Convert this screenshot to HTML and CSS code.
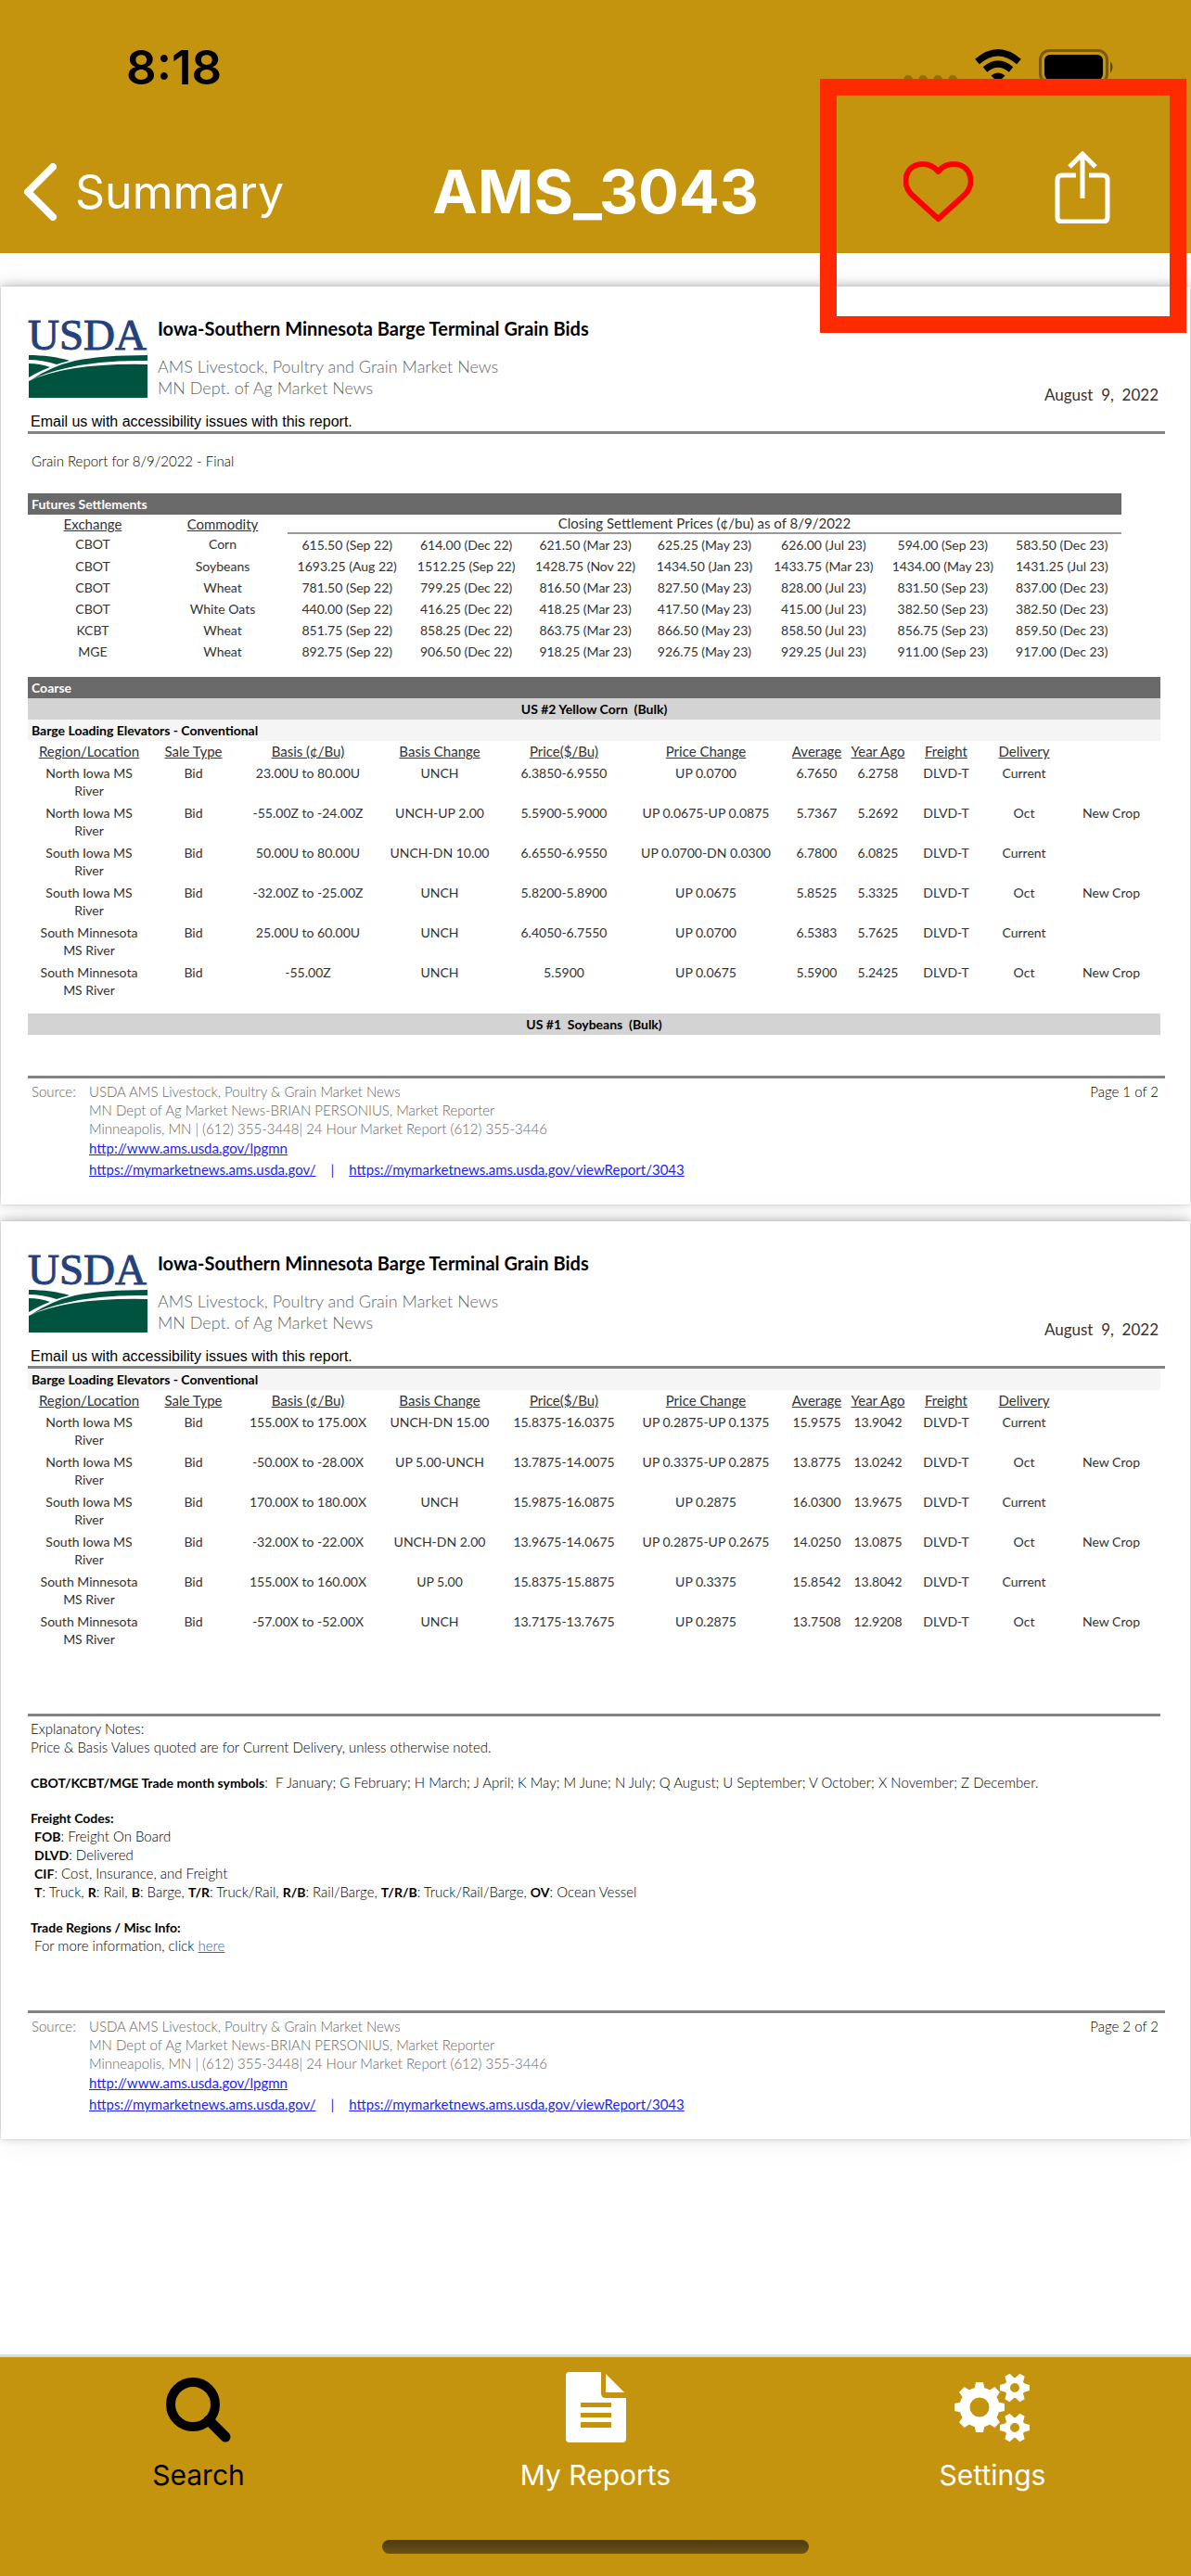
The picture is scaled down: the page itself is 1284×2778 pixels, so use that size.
FILE: index.html
```html
<!DOCTYPE html>
<html lang="en">
<head>
<meta charset="utf-8">
<meta name="viewport" content="width=device-width, initial-scale=1">
<title>AMS_3043</title>
<link rel="stylesheet" href="styles.css">
</head>
<body>
<svg class="defs" aria-hidden="true">
  <symbol id="fields" viewBox="0 0 128 46">
    <path fill="#00533e" d="M0 0C15 0 32 2 44 6Q36 8 30 10Q14 5 0 5ZM0 9Q12 9 23 13Q10 18 2 23L0 24ZM50 6Q80 0 128 0V6Q78 5 40 14Q18 19 2 27Q24 12 50 6ZM0 28Q44 8 128 10V46H0Z"/>
  </symbol>
</svg>

<header class="app-bar">
  <div class="status-bar">
    <span class="clock">8:18</span>
    <span class="status-icons">
      <svg width="58" height="38" viewBox="0 0 58 38" fill="#94700c"><circle cx="5" cy="33" r="5"/><circle cx="21" cy="33" r="5"/><circle cx="37" cy="33" r="5"/><circle cx="53" cy="33" r="5"/></svg>
      <svg width="50" height="38" viewBox="0 0 50 38" fill="none" stroke="#000" stroke-width="7"><path d="M2.500 13.500Q25-6 47.500 13.500"/><path d="M11 22Q25 10 39 22"/><path d="M25 36L17.500 28.500Q25 22.500 32.500 28.500Z" fill="#000" stroke="none"/></svg>
      <svg width="82" height="38" viewBox="0 0 82 38"><rect x="1.500" y="1.500" width="72" height="35" rx="10" fill="none" stroke="#795b0b" stroke-width="3"/><rect x="6" y="6" width="63" height="27" rx="6"/><path d="M77 13q5 6 0 13z" fill="#594308"/></svg>
    </span>
  </div>
  <nav class="nav-row">
    <a class="back" href="#summary">
      <svg width="36" height="62" viewBox="0 0 36 62" fill="none" stroke="#fff" stroke-width="8" stroke-linecap="round" stroke-linejoin="round"><path d="M32 4L5 31l27 27"/></svg>
      Summary
    </a>
    <h1 class="screen-title">AMS_3043</h1>
    <div class="actions">
      <button class="icon-btn" type="button" aria-label="Favorite">
        <svg width="75" height="78" viewBox="0 0 75 78" fill="none" stroke="#f00" stroke-width="6" stroke-linejoin="round"><path d="M37.500 73L9 47C-3 35 2 14 21 14C30 14 35 19 37.500 22C40 19 45 14 54 14C73 14 78 35 66 47Z"/></svg>
      </button>
      <button class="icon-btn" type="button" aria-label="Share">
        <svg width="60" height="78" viewBox="0 0 60 78" fill="none" stroke="#fff" stroke-width="5"><path d="M23 26H8q-5 0-5 5v40q0 5 5 5h44q5 0 5-5V31q0-5-5-5H37M30 51V4M16 17L30 3l14 14"/></svg>
      </button>
    </div>
  </nav>
  <div class="highlight" aria-hidden="true"></div>
</header>

<main class="viewer">
  <article class="sheet">
    <header class="report-head">
      <svg class="logo" width="129" height="90" viewBox="0 0 129 90" role="img" aria-label="USDA"><text x="0" y="38" class="logo-text">USDA</text><use href="#fields" x="1" y="44" width="128" height="46"/></svg>
      <div class="report-names">
        <h2>Iowa-Southern Minnesota Barge Terminal Grain Bids</h2>
        <p>AMS Livestock, Poultry and Grain Market News<br>MN Dept. of Ag Market News</p>
      </div>
      <time class="report-date" datetime="2022-08-09">August&nbsp; 9,&nbsp; 2022</time>
    </header>
    <p class="contact">Email us with accessibility issues with this report.</p>
    <div class="body">
      <p class="subject">Grain Report for 8/9/2022 - Final</p>

      <table class="futures">
        <caption class="band dark">Futures Settlements</caption>
        <colgroup><col class="w140"><col class="w140"><col><col><col><col><col><col><col></colgroup>
        <thead>
          <tr><th><u>Exchange</u></th><th><u>Commodity</u></th><th colspan="7" class="span-head">Closing Settlement Prices (¢/bu) as of 8/9/2022</th></tr>
        </thead>
        <tbody>
          <tr><td>CBOT</td><td>Corn</td><td>615.50 (Sep 22)</td><td>614.00 (Dec 22)</td><td>621.50 (Mar 23)</td><td>625.25 (May 23)</td><td>626.00 (Jul 23)</td><td>594.00 (Sep 23)</td><td>583.50 (Dec 23)</td></tr>
          <tr><td>CBOT</td><td>Soybeans</td><td>1693.25 (Aug 22)</td><td>1512.25 (Sep 22)</td><td>1428.75 (Nov 22)</td><td>1434.50 (Jan 23)</td><td>1433.75 (Mar 23)</td><td>1434.00 (May 23)</td><td>1431.25 (Jul 23)</td></tr>
          <tr><td>CBOT</td><td>Wheat</td><td>781.50 (Sep 22)</td><td>799.25 (Dec 22)</td><td>816.50 (Mar 23)</td><td>827.50 (May 23)</td><td>828.00 (Jul 23)</td><td>831.50 (Sep 23)</td><td>837.00 (Dec 23)</td></tr>
          <tr><td>CBOT</td><td>White Oats</td><td>440.00 (Sep 22)</td><td>416.25 (Dec 22)</td><td>418.25 (Mar 23)</td><td>417.50 (May 23)</td><td>415.00 (Jul 23)</td><td>382.50 (Sep 23)</td><td>382.50 (Dec 23)</td></tr>
          <tr><td>KCBT</td><td>Wheat</td><td>851.75 (Sep 22)</td><td>858.25 (Dec 22)</td><td>863.75 (Mar 23)</td><td>866.50 (May 23)</td><td>858.50 (Jul 23)</td><td>856.75 (Sep 23)</td><td>859.50 (Dec 23)</td></tr>
          <tr><td>MGE</td><td>Wheat</td><td>892.75 (Sep 22)</td><td>906.50 (Dec 22)</td><td>918.25 (Mar 23)</td><td>926.75 (May 23)</td><td>929.25 (Jul 23)</td><td>911.00 (Sep 23)</td><td>917.00 (Dec 23)</td></tr>
        </tbody>
      </table>

      <h3 class="band dark coarse">Coarse</h3>
      <h3 class="band mid">US #2 Yellow Corn&nbsp; (Bulk)</h3>
      <table class="bids">
        <caption class="band light">Barge Loading Elevators - Conventional</caption>
        <colgroup><col class="w132"><col class="w93"><col class="w154"><col class="w130"><col class="w138"><col class="w168"><col class="w71"><col class="w61"><col class="w86"><col class="w82"><col class="w106"></colgroup>
        <thead>
          <tr><th><u>Region/Location</u></th><th><u>Sale Type</u></th><th><u>Basis (¢/Bu)</u></th><th><u>Basis Change</u></th><th><u>Price($/Bu)</u></th><th><u>Price Change</u></th><th><u>Average</u></th><th><u>Year Ago</u></th><th><u>Freight</u></th><th><u>Delivery</u></th><td></td></tr>
        </thead>
        <tbody>
          <tr><td>North Iowa MS<br>River</td><td>Bid</td><td>23.00U to 80.00U</td><td>UNCH</td><td>6.3850-6.9550</td><td>UP 0.0700</td><td>6.7650</td><td>6.2758</td><td>DLVD-T</td><td>Current</td><td></td></tr>
          <tr><td>North Iowa MS<br>River</td><td>Bid</td><td>-55.00Z to -24.00Z</td><td>UNCH-UP 2.00</td><td>5.5900-5.9000</td><td>UP 0.0675-UP 0.0875</td><td>5.7367</td><td>5.2692</td><td>DLVD-T</td><td>Oct</td><td>New Crop</td></tr>
          <tr><td>South Iowa MS<br>River</td><td>Bid</td><td>50.00U to 80.00U</td><td>UNCH-DN 10.00</td><td>6.6550-6.9550</td><td>UP 0.0700-DN 0.0300</td><td>6.7800</td><td>6.0825</td><td>DLVD-T</td><td>Current</td><td></td></tr>
          <tr><td>South Iowa MS<br>River</td><td>Bid</td><td>-32.00Z to -25.00Z</td><td>UNCH</td><td>5.8200-5.8900</td><td>UP 0.0675</td><td>5.8525</td><td>5.3325</td><td>DLVD-T</td><td>Oct</td><td>New Crop</td></tr>
          <tr><td>South Minnesota<br>MS River</td><td>Bid</td><td>25.00U to 60.00U</td><td>UNCH</td><td>6.4050-6.7550</td><td>UP 0.0700</td><td>6.5383</td><td>5.7625</td><td>DLVD-T</td><td>Current</td><td></td></tr>
          <tr><td>South Minnesota<br>MS River</td><td>Bid</td><td>-55.00Z</td><td>UNCH</td><td>5.5900</td><td>UP 0.0675</td><td>5.5900</td><td>5.2425</td><td>DLVD-T</td><td>Oct</td><td>New Crop</td></tr>
        </tbody>
      </table>
      <h3 class="band mid next-class">US #1&nbsp; Soybeans&nbsp; (Bulk)</h3>
    </div>
    <footer class="source after-band">
      <span class="source-label">Source:</span>
      <div class="source-text">
        <p>USDA AMS Livestock, Poultry &amp; Grain Market News<br>MN Dept of Ag Market News-BRIAN PERSONIUS, Market Reporter<br>Minneapolis, MN | (612) 355-3448| 24 Hour Market Report (612) 355-3446</p>
        <p class="links"><a href="#lpgmn">http://www.ams.usda.gov/lpgmn</a></p>
        <p class="links"><a href="#mymarketnews">https://mymarketnews.ams.usda.gov/</a><span class="bar">|</span><a href="#report">https://mymarketnews.ams.usda.gov/viewReport/3043</a></p>
      </div>
      <span class="page-no">Page 1 of 2</span>
    </footer>
  </article>

  <article class="sheet">
    <header class="report-head">
      <svg class="logo" width="129" height="90" viewBox="0 0 129 90" role="img" aria-label="USDA"><text x="0" y="38" class="logo-text">USDA</text><use href="#fields" x="1" y="44" width="128" height="46"/></svg>
      <div class="report-names">
        <h2>Iowa-Southern Minnesota Barge Terminal Grain Bids</h2>
        <p>AMS Livestock, Poultry and Grain Market News<br>MN Dept. of Ag Market News</p>
      </div>
      <time class="report-date" datetime="2022-08-09">August&nbsp; 9,&nbsp; 2022</time>
    </header>
    <p class="contact">Email us with accessibility issues with this report.</p>
    <div class="body">
      <table class="bids">
        <caption class="band light">Barge Loading Elevators - Conventional</caption>
        <colgroup><col class="w132"><col class="w93"><col class="w154"><col class="w130"><col class="w138"><col class="w168"><col class="w71"><col class="w61"><col class="w86"><col class="w82"><col class="w106"></colgroup>
        <thead>
          <tr><th><u>Region/Location</u></th><th><u>Sale Type</u></th><th><u>Basis (¢/Bu)</u></th><th><u>Basis Change</u></th><th><u>Price($/Bu)</u></th><th><u>Price Change</u></th><th><u>Average</u></th><th><u>Year Ago</u></th><th><u>Freight</u></th><th><u>Delivery</u></th><td></td></tr>
        </thead>
        <tbody>
          <tr><td>North Iowa MS<br>River</td><td>Bid</td><td>155.00X to 175.00X</td><td>UNCH-DN 15.00</td><td>15.8375-16.0375</td><td>UP 0.2875-UP 0.1375</td><td>15.9575</td><td>13.9042</td><td>DLVD-T</td><td>Current</td><td></td></tr>
          <tr><td>North Iowa MS<br>River</td><td>Bid</td><td>-50.00X to -28.00X</td><td>UP 5.00-UNCH</td><td>13.7875-14.0075</td><td>UP 0.3375-UP 0.2875</td><td>13.8775</td><td>13.0242</td><td>DLVD-T</td><td>Oct</td><td>New Crop</td></tr>
          <tr><td>South Iowa MS<br>River</td><td>Bid</td><td>170.00X to 180.00X</td><td>UNCH</td><td>15.9875-16.0875</td><td>UP 0.2875</td><td>16.0300</td><td>13.9675</td><td>DLVD-T</td><td>Current</td><td></td></tr>
          <tr><td>South Iowa MS<br>River</td><td>Bid</td><td>-32.00X to -22.00X</td><td>UNCH-DN 2.00</td><td>13.9675-14.0675</td><td>UP 0.2875-UP 0.2675</td><td>14.0250</td><td>13.0875</td><td>DLVD-T</td><td>Oct</td><td>New Crop</td></tr>
          <tr><td>South Minnesota<br>MS River</td><td>Bid</td><td>155.00X to 160.00X</td><td>UP 5.00</td><td>15.8375-15.8875</td><td>UP 0.3375</td><td>15.8542</td><td>13.8042</td><td>DLVD-T</td><td>Current</td><td></td></tr>
          <tr><td>South Minnesota<br>MS River</td><td>Bid</td><td>-57.00X to -52.00X</td><td>UNCH</td><td>13.7175-13.7675</td><td>UP 0.2875</td><td>13.7508</td><td>12.9208</td><td>DLVD-T</td><td>Oct</td><td>New Crop</td></tr>
        </tbody>
      </table>

      <section class="notes">
        <p>Explanatory Notes:<br>Price &amp; Basis Values quoted are for Current Delivery, unless otherwise noted.</p>
        <p><b>CBOT/KCBT/MGE Trade month symbols</b>:&nbsp; F January; G February; H March; J April; K May; M June; N July; Q August; U September; V October; X November; Z December.</p>
        <p><b>Freight Codes:</b><br>&nbsp;<b>FOB</b>: Freight On Board<br>&nbsp;<b>DLVD</b>: Delivered<br>&nbsp;<b>CIF</b>: Cost, Insurance, and Freight<br>&nbsp;<b>T</b>: Truck, <b>R</b>: Rail, <b>B</b>: Barge, <b>T/R</b>: Truck/Rail, <b>R/B</b>: Rail/Barge, <b>T/R/B</b>: Truck/Rail/Barge, <b>OV</b>: Ocean Vessel</p>
        <p><b>Trade Regions / Misc Info:</b><br>&nbsp;For more information, click <a class="here" href="#info">here</a></p>
      </section>
    </div>
    <footer class="source after-notes">
      <span class="source-label">Source:</span>
      <div class="source-text">
        <p>USDA AMS Livestock, Poultry &amp; Grain Market News<br>MN Dept of Ag Market News-BRIAN PERSONIUS, Market Reporter<br>Minneapolis, MN | (612) 355-3448| 24 Hour Market Report (612) 355-3446</p>
        <p class="links"><a href="#lpgmn">http://www.ams.usda.gov/lpgmn</a></p>
        <p class="links"><a href="#mymarketnews">https://mymarketnews.ams.usda.gov/</a><span class="bar">|</span><a href="#report">https://mymarketnews.ams.usda.gov/viewReport/3043</a></p>
      </div>
      <span class="page-no">Page 2 of 2</span>
    </footer>
  </article>
</main>

<footer class="tab-area">
  <nav class="tabs">
    <a class="tab current" href="#search">
      <svg width="70" height="76" viewBox="0 0 70 76" fill="none" stroke="currentColor" stroke-width="10"><circle cx="29" cy="35" r="24"/><path d="M46 52l18 18" stroke-linecap="round" stroke-width="11"/></svg>
      Search
    </a>
    <a class="tab" href="#my-reports">
      <svg width="65" height="76" viewBox="0 0 65 76" fill="currentColor"><path fill-rule="evenodd" d="M4 0h34v23q0 5 5 5h22v44q0 4-4 4H4q-4 0-4-4V4q0-4 4-4zM16 33v5h33v-5zM16 44v5h33v-5zM16 54v6h33v-6z"/><path d="M43 2l20 20H43z"/></svg>
      My Reports
    </a>
    <a class="tab" href="#settings">
      <svg width="82" height="76" viewBox="0 0 82 76" fill="currentColor">
        <defs>
          <path id="tooth" d="M-6-17L-4-27H4L6-17z"/>
          <path id="cog" d="M-5-9L-3-16H3L5-9z"/>
          <g id="small-gear"><circle r="8" fill="none" stroke="currentColor" stroke-width="6"/><use href="#cog" transform="rotate(30)"/><use href="#cog" transform="rotate(90)"/><use href="#cog" transform="rotate(150)"/><use href="#cog" transform="rotate(210)"/><use href="#cog" transform="rotate(270)"/><use href="#cog" transform="rotate(330)"/></g>
        </defs>
        <g transform="translate(27 38)"><circle r="16" fill="none" stroke="currentColor" stroke-width="11"/><use href="#tooth"/><use href="#tooth" transform="rotate(45)"/><use href="#tooth" transform="rotate(90)"/><use href="#tooth" transform="rotate(135)"/><use href="#tooth" transform="rotate(180)"/><use href="#tooth" transform="rotate(225)"/><use href="#tooth" transform="rotate(270)"/><use href="#tooth" transform="rotate(315)"/></g>
        <use href="#small-gear" transform="translate(65 17)"/>
        <use href="#small-gear" transform="translate(65 60)"/>
      </svg>
      Settings
    </a>
  </nav>
  <div class="home-indicator"></div>
</footer>
</body>
</html>
```
FILE: styles.css
```css
* { box-sizing: border-box; }
body {
  margin: 0;
  min-height: 100vh;
  display: flex;
  flex-direction: column;
  background: #fff;
  color: #333;
  font: 400 14px/23px Lato, "Liberation Sans", sans-serif;
}
h1, h2, h3, p { margin: 0; font-size: inherit; }
table { border-collapse: collapse; table-layout: fixed; width: 100%; }
th { font-weight: inherit; font-size: 15px; }
th, td { padding: 0; text-align: center; vertical-align: top; white-space: nowrap; }
svg { display: block; flex: none; }
.defs { position: absolute; width: 0; height: 0; }

/* top bar */
.app-bar {
  position: relative;
  background: #c5940e;
  height: 273px;
  color: #fff;
  font-family: Inter, "Liberation Sans", sans-serif;
}
.status-bar {
  display: flex;
  justify-content: space-between;
  padding: 53px 82px 0 136px;
  color: #000;
}
.clock { font-size: 51px; line-height: 40px; font-weight: 600; }
.status-icons { display: flex; gap: 19px; }
.nav-row {
  display: grid;
  grid-template-columns: 1fr auto 1fr;
  align-items: start;
  margin-top: 70px;
  padding: 0 25px;
}
.back {
  display: flex;
  align-items: center;
  gap: 20px;
  padding-top: 13px;
  color: #fff;
  font-size: 50px;
  line-height: 62px;
  text-decoration: none;
}
.screen-title { padding-top: 5px; font-size: 65px; line-height: 78px; font-weight: 700; }
.actions { display: flex; justify-content: flex-end; gap: 88px; padding-right: 62px; }
.icon-btn { padding: 0; border: 0; background: none; }
.highlight {
  position: absolute;
  top: 85px;
  right: 5px;
  width: 395px;
  height: 274px;
  border: 18px solid #ff2a00;
  z-index: 1;
}

/* document pages */
.viewer {
  flex: 1;
  display: flex;
  flex-direction: column;
  gap: 18px;
  padding: 36px 1px;
}
.sheet {
  background: #fff;
  padding: 30px 27px 26px 29px;
  box-shadow: 0 0 2px rgba(0,0,0,.15), 0 -2px 10px rgba(0,0,0,.22), 0 0 36px rgba(0,0,0,.06);
}
.report-head { display: flex; height: 98px; gap: 11px; }
.logo { overflow: visible; }
.logo-text { font: 47px "Liberation Serif", serif; fill: #25417b; stroke: #25417b; }
.report-names { padding-top: 3px; flex: 1; color: #666; font-size: 18px; font-weight: 300; }
.report-names h2 { margin-bottom: 18px; color: #000; font-size: 20px; font-weight: 700; line-height: 24px; }
.report-date { align-self: flex-end; padding-right: 7px; font-size: 17px; }
.contact {
  margin-top: 8px;
  padding-left: 3px;
  border-bottom: 3px solid #838383;
  color: #000;
  font: 16px/20px "Liberation Sans", Arial, sans-serif;
}
.body { padding-right: 5px; }
.subject { margin: 19px 0 25px; padding-left: 4px; color: #000; font-size: 15px; font-weight: 300; line-height: 20px; }
.band { height: 23px; padding: 0 4px; font-size: 14px; font-weight: 700; text-align: left; }
.dark { background: #696969; color: #fff; }
.mid { background: #d3d3d3; color: #000; text-align: center; }
.light { background: #f5f5f5; color: #000; }
.futures { width: calc(100% - 42px); }
.futures th { line-height: 20px; height: 20px; }
.futures .span-head { border-bottom: 2px solid #999; line-height: 18px; }
.coarse { margin-top: 16px; }
.bids tbody tr { height: 43px; }
.bids tbody td { padding-top: 2px; line-height: 19px; }
.next-class { margin-top: 13px; }
.w61 { width: 61px; } .w71 { width: 71px; } .w82 { width: 82px; } .w86 { width: 86px; }
.w93 { width: 93px; } .w106 { width: 106px; } .w130 { width: 130px; } .w132 { width: 132px; }
.w138 { width: 138px; } .w140 { width: 140px; } .w154 { width: 154px; } .w168 { width: 168px; }

.notes {
  display: grid;
  gap: 18px;
  margin-top: 68px;
  padding: 3px 0 0 3px;
  border-top: 3px solid #838383;
  color: #000;
  font-size: 15px;
  font-weight: 300;
  line-height: 20px;
}
.notes b { font-weight: 700; font-size: 14px; line-height: 16px; }
.here { color: #2a63c0; }
.source {
  display: flex;
  padding: 4px 7px 0 4px;
  border-top: 3px solid #838383;
  color: #666;
  font-size: 15px;
  font-weight: 300;
  line-height: 20px;
}
.after-band { margin-top: 44px; }
.after-notes { margin-top: 60px; }
.source-label { width: 62px; }
.source-text { flex: 1; }
.links, .links a { color: #1f1ff2; font-weight: 400; line-height: 23px; }
.bar { padding: 0 16px; }
.page-no { color: #000; }

/* bottom tabs */
.tab-area {
  background: #c5940e;
  border-top: 3px solid #dcdcdc;
  padding: 16px 0 24px;
  font: 400 30px/36px Inter, "Liberation Sans", sans-serif;
}
.tabs { display: grid; grid-template-columns: repeat(3, 1fr); }
.tab { display: flex; flex-direction: column; align-items: center; gap: 17px; color: #fff; text-decoration: none; }
.current { color: #000; }
.home-indicator {
  width: 460px;
  height: 15px;
  margin: 52px auto 0;
  border-radius: 8px;
  background: linear-gradient(#4b3a10, #6e5210);
}
```
